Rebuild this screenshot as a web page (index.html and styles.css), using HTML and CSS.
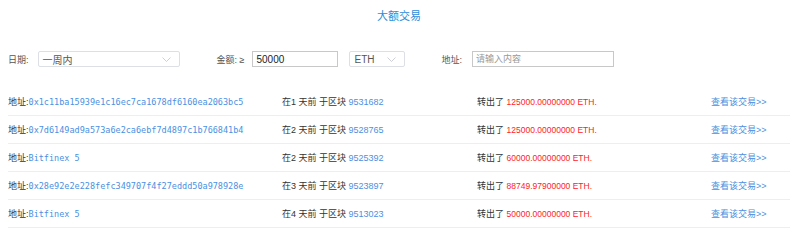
FILE: index.html
```html
<!DOCTYPE html>
<html lang="zh">
<head>
    <meta charset="UTF-8">
    <title>大额交易</title>
    <link rel="stylesheet" href="styles.css">
</head>
<body>
    <h1 class="title">大额交易</h1>

    <!-- filter bar -->
    <div class="filters">
        <span class="label">日期:</span>
        <div class="select select-date">
            <span>一周内</span>
            <svg class="chevron" width="9" height="5" viewBox="0 0 9 5"><path d="M0.5 0.5 L4.5 4.5 L8.5 0.5" fill="none" stroke="#c0c4cc" stroke-width="0.8"/></svg>
        </div>
        <span class="label label-amount">金额: ≥</span>
        <input class="field field-amount" type="text" value="50000">
        <div class="select select-coin">
            <span>ETH</span>
            <svg class="chevron" width="9" height="5" viewBox="0 0 9 5"><path d="M0.5 0.5 L4.5 4.5 L8.5 0.5" fill="none" stroke="#c0c4cc" stroke-width="0.8"/></svg>
        </div>
        <span class="label label-addr">地址:</span>
        <input class="field field-addr" type="text" placeholder="请输入内容">
    </div>

    <!-- transfers -->
    <ul class="list">
        <li class="row">
            <span class="col-addr">地址:<a class="hash">0x1c11ba15939e1c16ec7ca1678df6160ea2063bc5</a></span>
            <span class="col-block">在1 天前 于区块 <a>9531682</a></span>
            <span class="col-amount">转出了 <em>125000.00000000 ETH.</em></span>
            <a class="col-link">查看该交易&gt;&gt;</a>
        </li>
        <li class="row">
            <span class="col-addr">地址:<a class="hash">0x7d6149ad9a573a6e2ca6ebf7d4897c1b766841b4</a></span>
            <span class="col-block">在2 天前 于区块 <a>9528765</a></span>
            <span class="col-amount">转出了 <em>125000.00000000 ETH.</em></span>
            <a class="col-link">查看该交易&gt;&gt;</a>
        </li>
        <li class="row">
            <span class="col-addr">地址:<a class="hash">Bitfinex 5</a></span>
            <span class="col-block">在2 天前 于区块 <a>9525392</a></span>
            <span class="col-amount">转出了 <em>60000.00000000 ETH.</em></span>
            <a class="col-link">查看该交易&gt;&gt;</a>
        </li>
        <li class="row">
            <span class="col-addr">地址:<a class="hash">0x28e92e2e228fefc349707f4f27eddd50a978928e</a></span>
            <span class="col-block">在3 天前 于区块 <a>9523897</a></span>
            <span class="col-amount">转出了 <em>88749.97900000 ETH.</em></span>
            <a class="col-link">查看该交易&gt;&gt;</a>
        </li>
        <li class="row">
            <span class="col-addr">地址:<a class="hash">Bitfinex 5</a></span>
            <span class="col-block">在4 天前 于区块 <a>9513023</a></span>
            <span class="col-amount">转出了 <em>50000.00000000 ETH.</em></span>
            <a class="col-link">查看该交易&gt;&gt;</a>
        </li>
    </ul>
</body>
</html>
```

FILE: styles.css
```css
body {
    margin: 0;
    padding: 0 10px 0 8px;
    font-family: "Liberation Sans", "Noto Sans CJK SC", sans-serif;
    font-size: 9px;
    color: #333;
    background: #fff;
}

.title {
    margin: 0;
    height: 32px;
    line-height: 32px;
    text-align: center;
    font-size: 11px;
    font-weight: normal;
    color: #2d8cd8;
}

.filters {
    display: flex;
    align-items: center;
    margin-top: 19px;
    height: 16px;
}

.label {
    color: #555;
    white-space: nowrap;
}

.label-amount {
    margin-left: 37px;
}

.label-addr {
    margin-left: 36px;
}

.select,
.field {
    box-sizing: border-box;
    height: 16px;
    border: 1px solid #dcdfe6;
    border-radius: 2px;
    background: #fff;
    font-family: inherit;
    font-size: 9px;
    color: #333;
}

.select {
    display: flex;
    align-items: center;
    justify-content: space-between;
    padding: 0 8px 0 4px;
}

.select-date {
    width: 142px;
    margin-left: 9px;
    font-size: 10px;
    color: #555;
}

.select-coin {
    width: 56px;
    margin-left: 11px;
    font-size: 10px;
    color: #555;
}

.field {
    padding: 0 3px;
    outline: none;
    border-color: #c8c8c8;
    border-radius: 0;
}

.field::placeholder {
    color: #999;
}

.field-amount {
    width: 86px;
    margin-left: 8px;
    font-size: 10px;
    color: #222;
}

.field-addr {
    width: 142px;
    margin-left: 10px;
}

.list {
    list-style: none;
    margin: 21px 0 0;
    padding: 0;
}

.row {
    display: flex;
    align-items: center;
    height: 28px;
    box-sizing: border-box;
    padding-bottom: 1px;
    border-bottom: 1px solid #ebeef5;
}

.row a {
    color: #4a90e2;
}

.col-addr {
    width: 274px;
}

.hash {
    font-family: "DejaVu Sans Mono", monospace;
    font-size: 8.5px;
}

.col-block {
    width: 195px;
}

.col-amount {
    width: 234px;
}

.col-amount em {
    font-style: normal;
    font-size: 8.5px;
    color: #f22;
}

.col-link {
    color: #4a90e2;
}
```
